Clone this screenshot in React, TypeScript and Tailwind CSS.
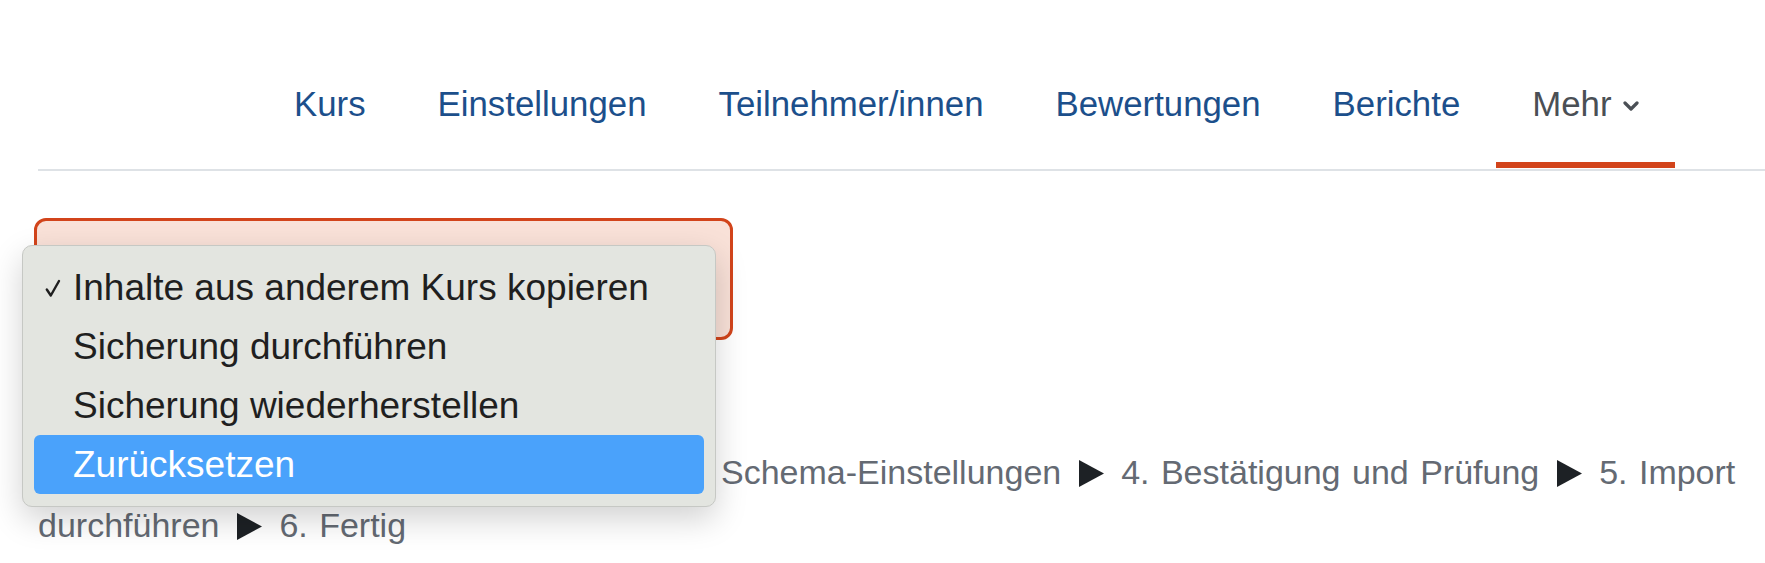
import React from "react";

const tabs = ["Kurs", "Einstellungen", "Teilnehmer/innen", "Bewertungen", "Berichte"];

const options = [
  "Inhalte aus anderem Kurs kopieren",
  "Sicherung durchführen",
  "Sicherung wiederherstellen",
  "Zurücksetzen",
];

// first steps sit under the open menu
const hiddenSteps = ["1. Kursauswahl", "2. Grundeinstellungen"];
const steps = [
  "3. Schema-Einstellungen",
  "4. Bestätigung und Prüfung",
  "5. Import durchführen",
  "6. Fertig",
];

function Arrow({ tight = false }: { tight?: boolean }) {
  return (
    <svg
      className={`${tight ? "mx-0" : "mx-[6px]"} inline-block align-[-3px]`}
      width="25"
      height="27"
      viewBox="0 0 25 27"
    >
      <path d="M0 0 L25 13.5 L0 27 Z" fill="#1d2125" />
    </svg>
  );
}

export default function App() {
  return (
    <div className="relative min-h-[563px] w-full bg-white font-['Liberation_Sans',Arial,sans-serif]">
      {/* secondary navigation */}
      <div className="ml-[38px] border-b-2 border-[#dee2e6] pb-[1px]">
        <ul className="flex pl-[220px]">
          {tabs.map((tab) => (
            <li key={tab}>
              <a className="block border-b-[6px] border-transparent px-[36px] pt-[83px] pb-[37px] text-[34.8px] leading-[42px] text-[#1c4f8b]">
                {tab}
              </a>
            </li>
          ))}
          <li>
            <a className="flex items-center border-b-[6px] border-[#d2441b] px-[36px] pt-[83px] pb-[37px] text-[34.8px] leading-[42px] text-[#4a4f55]">
              Mehr
              <svg className="ml-[11px] mt-[4px]" width="16" height="10" viewBox="0 0 16 10">
                <path d="M2 2 L8 8 L14 2" fill="none" stroke="#4a4f55" strokeWidth="3.2" strokeLinecap="round" strokeLinejoin="round" />
              </svg>
            </a>
          </li>
        </ul>
      </div>

      {/* page content */}
      <div className="pl-[38px] pr-[20px] pt-[47px]">
        <div className="ml-[-4px] h-[122px] w-[699px] rounded-[12px] border-[3px] border-[#d2441b] bg-[#f9e1d8]" />

        <p className="mt-[106px] text-[34px] leading-[53px] text-[#646a73]">
          <span className="tracking-[-0.25px]">
            {hiddenSteps.map((step) => (
              <React.Fragment key={step}>
                {step} <Arrow tight />{" "}
              </React.Fragment>
            ))}
          </span>
          <span className="[word-spacing:2px]">
            {steps.map((step, i) => (
              <React.Fragment key={step}>
                {step}
                {i < steps.length - 1 && (
                  <>
                    {" "}
                    <Arrow />{" "}
                  </>
                )}
              </React.Fragment>
            ))}
          </span>
        </p>
      </div>

      {/* open select menu */}
      <div className="absolute left-[22px] top-[245px] w-[694px] rounded-[10px] border border-[#c6c8c4] bg-[#e3e5e0] py-[12px] shadow-[0_12px_32px_rgba(0,0,0,0.18)]">
        {options.map((option, i) => {
          const active = i === options.length - 1;
          return (
            <div
              key={option}
              className={`relative mx-[11px] flex h-[59px] items-center rounded-[6px] pl-[39px] text-[37px] ${
                active ? "bg-[#4aa2fb] text-white" : "text-[#1f1f1f]"
              }`}
            >
              {i === 0 && (
                <svg className="absolute left-[11px] top-[21px]" width="16" height="19" viewBox="0 0 16 19">
                  <path d="M1.8 10.5 L5.8 16.5 L14 2" fill="none" stroke="#1f1f1f" strokeWidth="2.4" strokeLinecap="round" strokeLinejoin="round" />
                </svg>
              )}
              {option}
            </div>
          );
        })}
      </div>
    </div>
  );
}
